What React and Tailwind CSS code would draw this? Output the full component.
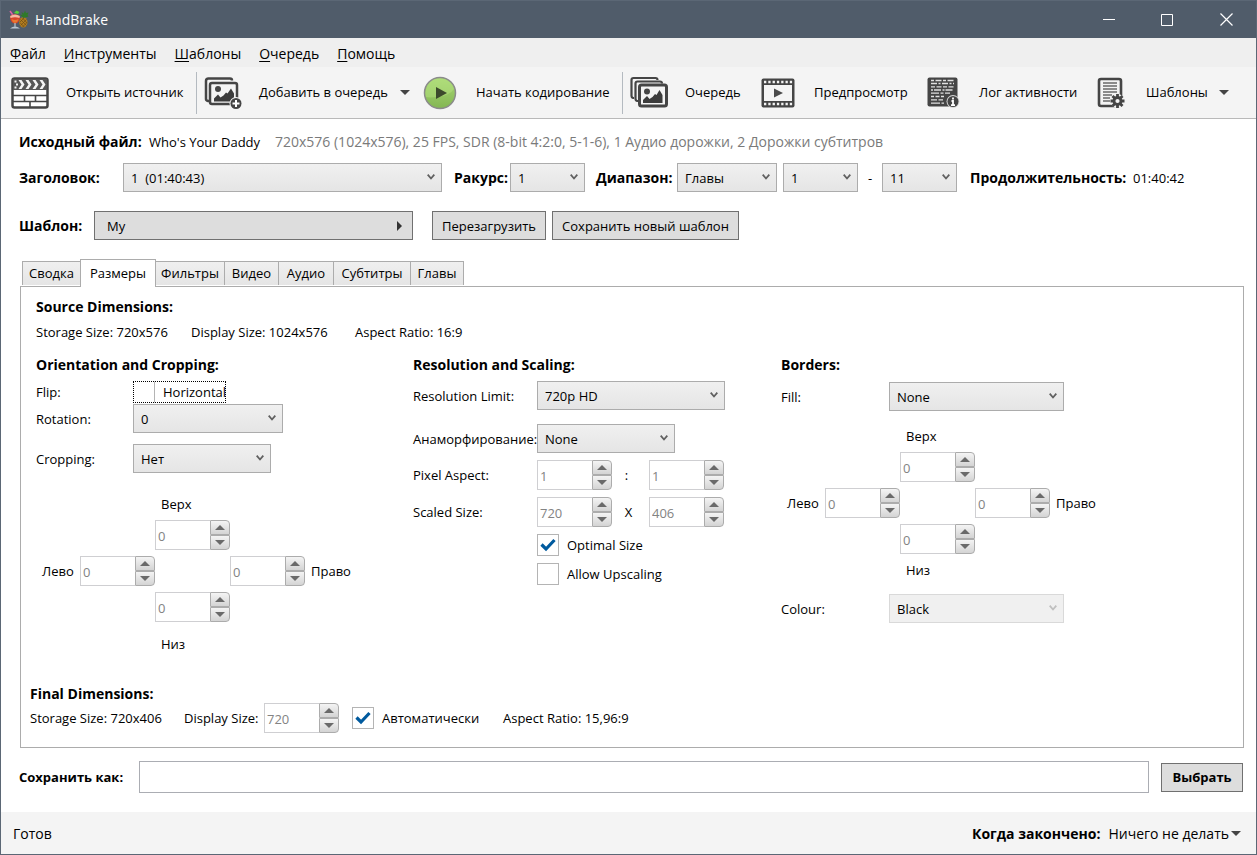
import React, { useState } from 'react';
import clsx from 'clsx';

const INK = '#454545';

const AppLogo = () => (
  <svg width="20" height="20" viewBox="0 0 20 20" aria-hidden="true">
    <ellipse cx="14.300" cy="12.200" rx="4.200" ry="5.300" fill="#b07d20" />
    <path d="M11.500 9.500l6 6M10.800 12.500l4.500 4.500M13.500 8l4.500 5M17.500 9.500l-6 6M18 12.500l-4.500 4.500M15 8l-4 4" stroke="#6b4710" strokeWidth=".6" />
    <path d="M14.500 8l-4-3.500 3 .5-1-3 2.300 1.500L16 .5l1 2.500 2.500-.5-1 2.500 1 1.500L16 7.500z" fill="#2f7a2a" />
    <path d="M5 3l2.500-2.500L10.500 2 9 4z" fill="#54d13a" />
    <path d="M1 1l3.500 5" stroke="#e05fa8" strokeWidth="1.500" />
    <path d="M1 6q5-3.500 10 0 0 6-4 7.500H5Q1 12 1 6z" fill="#d8432b" />
    <path d="M2.500 9q3.500 2 7 0-.5 3-3.500 4-3-1-3.500-4z" fill="#e8792f" />
    <path d="M1.200 6q4.800-3 9.600 0l-.3 2q-4.500-1.500-9 0z" fill="#f3b9a4" />
    <path d="M6 13v4.500M3 18q3-2 6 0z" stroke="#b9c6d2" strokeWidth="1.200" fill="#b9c6d2" />
  </svg>
);

const ClapperIcon = () => (
  <svg width="38" height="32" viewBox="0 0 38 32" fill="none" aria-hidden="true">
    <rect x="1.500" y="1.500" width="35" height="29" rx="2" fill="#fff" stroke={INK} strokeWidth="2.500" />
    <path d="M2 2h34v11H2z" fill="#565656" />
    <g fill="#f4f4f4">
      <path d="M7.500 3h3l3 4.500-3 4.500h-3l3-4.500zM14.500 3h3l3 4.500-3 4.500h-3l3-4.500zM21.500 3h3l3 4.500-3 4.500h-3l3-4.500zM28.500 3h3l3 4.500-3 4.500h-3l3-4.500z" />
      <path d="M3.500 3.500h2v2h-2zM5 6.500h2v2H5zM3.500 9.500h2v2h-2z" />
    </g>
    <path d="M2 18.500h34M2 24.500h34M13.500 18.500v6M24.500 18.500v6M19 24.500V30" stroke={INK} strokeWidth="1.600" />
  </svg>
);

const PictureShape = () => (
  <>
    <rect x="9.500" y="9" width="27" height="21" rx="2" fill="#f4f4f4" stroke={INK} strokeWidth="3" />
    <circle cx="17" cy="15.500" r="3" fill={INK} />
    <path d="M13 27v-3l4-4 2.500 3 3-2 2.500-3 1.500 1 3-5 3 5v8z" fill="#3c3c3c" />
  </>
);

const AddQueueIcon = () => (
  <svg width="39" height="34" viewBox="0 0 39 34" fill="none" aria-hidden="true">
    <path d="M5 25H4q-2-.5-2-2V5q0-2.500 2.500-2.500H26q2 0 2 2" stroke={INK} strokeWidth="2.500" />
    <rect x="6" y="7" width="27" height="21" rx="2" fill="#f4f4f4" stroke={INK} strokeWidth="2.500" />
    <circle cx="14" cy="13" r="3" fill={INK} />
    <path d="M10 25.500v-3l4-4 2.500 3 3-2 2.500-3 1.500 1 3.500-5 3 5v8z" fill="#3c3c3c" />
    <circle cx="32" cy="27.500" r="6.500" fill="#f4f4f4" />
    <circle cx="32" cy="27.500" r="5.500" fill={INK} />
    <path d="M32 24v7M28.500 27.500h7" stroke="#fff" strokeWidth="2" />
  </svg>
);

const PlayIcon = () => (
  <svg width="34" height="34" viewBox="0 0 34 34" aria-hidden="true">
    <defs>
      <linearGradient id="play" x1="0" y1="0" x2="0" y2="1">
        <stop offset="0" stopColor="#a9d875" />
        <stop offset="1" stopColor="#83b652" />
      </linearGradient>
    </defs>
    <circle cx="17" cy="17" r="15.500" fill="url(#play)" stroke="#8b8b8b" strokeWidth="1.500" />
    <path d="M3 21A14.500 14.500 0 0 1 31 13q-4 6-14 7.500T3 21z" fill="#b5e27f" opacity=".5" />
    <path d="M13 11l11 6-11 6z" fill="#3c4a2c" />
  </svg>
);

const QueueIcon = () => (
  <svg width="39" height="33" viewBox="0 0 39 33" fill="none" aria-hidden="true">
    <path d="M4 22H3q-1.500-.5-1.500-2V4Q1.500 2 3.500 2h22q2 0 2 2" stroke={INK} strokeWidth="2.200" />
    <path d="M8 25H7q-1.500-.5-1.500-2V7.500q0-2 2-2H30q2 0 2 2" stroke={INK} strokeWidth="2.200" />
    <PictureShape />
  </svg>
);

const PreviewIcon = () => (
  <svg width="34" height="30" viewBox="0 0 34 30" fill="none" aria-hidden="true">
    <rect x=".5" y=".5" width="33" height="29" rx="2" fill={INK} />
    <path d="M3 4h29M3 26h29" stroke="#f4f4f4" strokeWidth="2.600" strokeDasharray="2.300 2" />
    <rect x="3" y="7" width="28" height="16" fill="#f4f4f4" />
    <path d="M13 10.500l9 4.500-9 4.500z" fill="#4a4a4a" />
  </svg>
);

const LogIcon = () => (
  <svg width="33" height="31" viewBox="0 0 33 31" fill="none" aria-hidden="true">
    <rect x=".5" y=".5" width="30" height="29" rx="2" fill={INK} />
    <g stroke="#e0e0e0" strokeWidth="1.300">
      <path d="M4 3.500h23" strokeDasharray="3 1.500 6 1.500" />
      <path d="M4 6.500h23" strokeDasharray="6 1.500 2 1.500" />
      <path d="M4 9.800h23" strokeDasharray="4 1.500 5 1.500" />
      <path d="M4 13h22" strokeDasharray="2 1 7 1.500" />
      <path d="M4 16.200h19" strokeDasharray="8 1.500 3 1.500" />
      <path d="M4 19.500h14" strokeDasharray="3 1.500 4 1.500" />
      <path d="M4 22.800h12" strokeDasharray="6 1.500" />
      <path d="M4 26.200h13" strokeDasharray="9 1.500" />
    </g>
    <circle cx="26" cy="24.500" r="6.500" fill="#d8d8d8" />
    <circle cx="26" cy="24.500" r="5.500" fill={INK} />
    <path d="M26 20.500v2M24.500 24h1.500v4M24 28.200h4" stroke="#fff" strokeWidth="1.800" />
  </svg>
);

const PresetsIcon = () => (
  <svg width="29" height="32" viewBox="0 0 29 32" fill="none" aria-hidden="true">
    <rect x="2" y="2" width="22" height="27" rx="2" fill="#f4f4f4" stroke={INK} strokeWidth="2.600" />
    <path d="M6 6h14M6 9h14M6 12h14M6 15h14M6 18h9M6 21h7M6 24h7" stroke="#6a6a6a" strokeWidth="1.300" />
    <circle cx="20.500" cy="24" r="7" fill="#f4f4f4" />
    <path d="M20.500 17v14M13.500 24h14M15.500 19l10 10M25.500 19l-10 10" stroke={INK} strokeWidth="2.800" />
    <circle cx="20.500" cy="24" r="3.500" fill="#f4f4f4" stroke={INK} strokeWidth="2.800" />
  </svg>
);

const Caret = () => (
  <svg width="10" height="5" viewBox="0 0 10 5" className="shrink-0" aria-hidden="true">
    <path d="M0 0h10L5 5z" fill="#444" />
  </svg>
);

const Select = ({ label, options, className, disabled }) => (
  <span className={clsx('relative block h-[29px] shrink-0', className)}>
    <select
      aria-label={label}
      disabled={disabled}
      className={clsx(
        'h-full w-full appearance-none border pl-[7px] pr-5 text-black opacity-100',
        disabled ? 'border-[#d9d9d9] bg-[#f0f0f0]' : 'border-[#acacac] bg-gradient-to-b from-[#f0f0f0] to-[#e5e5e5]'
      )}
    >
      {options.map((option) => (
        <option key={option}>{option}</option>
      ))}
    </select>
    <svg width="8" height="6" viewBox="0 0 8 6" className="pointer-events-none absolute right-[7px] top-[11px]" aria-hidden="true">
      <path d="M.7.7L4 4.500 7.300.7" fill="none" stroke={disabled ? '#bfbfbf' : '#606060'} strokeWidth="1.800" />
    </svg>
  </span>
);

const spinButton =
  'flex h-[15px] w-5 items-center justify-center border border-[#acacac] bg-gradient-to-b from-[#f4f4f4] to-[#d4d4d4]';

const Spinner = ({ label, value }) => (
  <span className="flex h-[30px] w-[75px] shrink-0">
    <input aria-label={label} defaultValue={value} disabled className="w-[55px] border border-r-0 border-[#cfcfd2] bg-white pl-0.5 pt-0.5 text-[#838383]" />
    <span className="flex flex-col">
      <button type="button" aria-label={`${label} +`} className={clsx(spinButton, 'rounded-tr-sm')}>
        <svg width="10" height="5" viewBox="0 0 10 5"><path d="M0 5h10L5 0z" fill="#6a6a6a" /></svg>
      </button>
      <button type="button" aria-label={`${label} -`} className={clsx(spinButton, 'rounded-br-sm')}>
        <svg width="10" height="5" viewBox="0 0 10 5"><path d="M0 0h10L5 5z" fill="#6a6a6a" /></svg>
      </button>
    </span>
  </span>
);

const Checkbox = ({ label, defaultChecked, className, boxClassName = 'border-[#b4b4b4] bg-white' }) => {
  const [checked, setChecked] = useState(Boolean(defaultChecked));
  return (
    <label className={clsx('flex h-[22px] items-center gap-2 whitespace-nowrap', className)}>
      <span className="relative block size-[22px] shrink-0">
        <input
          type="checkbox"
          checked={checked}
          onChange={(e) => setChecked(e.target.checked)}
          className={clsx('block size-full appearance-none border', boxClassName)}
        />
        {checked && (
          <svg width="16" height="14" viewBox="0 0 16 14" className="pointer-events-none absolute left-[3px] top-1" aria-hidden="true">
            <path d="M1.500 6.500l4.500 4.500L14.500 2" fill="none" stroke="#005a9e" strokeWidth="3.200" />
          </svg>
        )}
      </span>
      {label}
    </label>
  );
};

// Top / left / right / bottom values laid out as a cross
const Sides = ({ name, bottomClassName }) => (
  <div className="grid grid-cols-[44px_75px_75px_75px_auto] items-center gap-y-1.5">
    <span className="col-start-3 pl-1.5">Верх</span>
    <span className="col-start-3"><Spinner label={`${name} верх`} value="0" /></span>
    <span className="col-start-1 pl-1.5">Лево</span>
    <Spinner label={`${name} лево`} value="0" />
    <span className="col-start-4"><Spinner label={`${name} право`} value="0" /></span>
    <span className="pl-1.5">Право</span>
    <span className="col-start-3"><Spinner label={`${name} низ`} value="0" /></span>
    <span className={clsx('col-start-3 pl-1.5', bottomClassName)}>Низ</span>
  </div>
);

const Row = ({ label, labelClassName, className, children }) => (
  <div className={clsx('flex items-center', className)}>
    <span className={clsx('shrink-0 whitespace-nowrap', labelClassName)}>{label}</span>
    {children}
  </div>
);

const ToolButton = ({ icon, label, caret, className, iconClassName }) => (
  <button type="button" className={clsx('flex h-full shrink-0 items-center whitespace-nowrap', className)}>
    <span className={clsx('shrink-0', iconClassName)}>{icon}</span>
    <span className="pb-0.5">{label}</span>
    {caret && <span className="ml-auto"><Caret /></span>}
  </button>
);

const MENU = [
  ['Ф', 'айл'],
  ['И', 'нструменты'],
  ['Ш', 'аблоны'],
  ['О', 'чередь'],
  ['П', 'омощь'],
];

const TABS = [
  ['Сводка', 'w-[58px]'],
  ['Размеры', 'w-[76px]'],
  ['Фильтры', 'w-[69px]'],
  ['Видео', 'w-[54px]'],
  ['Аудио', 'w-[55px]'],
  ['Субтитры', 'w-[77px]'],
  ['Главы', 'w-[53px]'],
];

const TitleBar = () => (
  <header className="flex h-[37px] items-center bg-[#505c6a] pl-2 text-sm text-white">
    <AppLogo />
    <h1 className="ml-1.5">HandBrake</h1>
    <div className="ml-auto flex h-full">
      <button type="button" aria-label="Свернуть" className="flex w-[58px] items-center justify-center">
        <svg width="12" height="12"><path d="M0 5.500h12" stroke="#fff" /></svg>
      </button>
      <button type="button" aria-label="Развернуть" className="flex w-[58px] items-center justify-center">
        <svg width="12" height="12"><path d="M.5.5h11v11H.5z" fill="none" stroke="#fff" /></svg>
      </button>
      <button type="button" aria-label="Закрыть" className="flex w-[60px] items-center justify-center">
        <svg width="13" height="13"><path d="M.5.5l12 12M12.500.5l-12 12" stroke="#fff" strokeWidth="1.200" /></svg>
      </button>
    </div>
  </header>
);

const Toolbar = () => (
  <div className="flex h-[52px] items-center border-b border-[#b9b9b9] bg-[#f4f4f4]">
    <ToolButton className="w-[195px] pl-2.5" iconClassName="w-[55px]" icon={<ClapperIcon />} label="Открыть источник" />
    <span className="h-[42px] w-px bg-[#b4bac0]" />
    <ToolButton className="w-[213px] pl-[7px]" iconClassName="w-[55px]" icon={<AddQueueIcon />} label="Добавить в очередь" caret />
    <ToolButton className="w-[212px] pl-[13px]" iconClassName="w-[53px]" icon={<PlayIcon />} label="Начать кодирование" />
    <span className="h-[42px] w-px bg-[#b4bac0]" />
    <ToolButton className="w-[131px] pl-[7px]" iconClassName="w-[55px]" icon={<QueueIcon />} label="Очередь" />
    <ToolButton className="w-[166px] pl-[7px]" iconClassName="w-[53px]" icon={<PreviewIcon />} label="Предпросмотр" />
    <ToolButton className="w-[169px] pl-[7px]" iconClassName="w-[52px]" icon={<LogIcon />} label="Лог активности" />
    <ToolButton className="w-[140px] pl-2" iconClassName="w-[49px]" icon={<PresetsIcon />} label="Шаблоны" caret />
  </div>
);

const DimensionsTab = () => (
  <section className="ml-px border border-[#acacac] pb-3.5 pl-[15px] pt-2.5 leading-5">
    <h2 className="text-sm font-bold leading-5">Source Dimensions:</h2>
    <div className="mt-[5px] flex whitespace-nowrap">
      <span className="w-[155px]">Storage Size: 720x576</span>
      <span className="w-[164px]">Display Size: 1024x576</span>
      <span>Aspect Ratio: 16:9</span>
    </div>

    <div className="mt-[13px] flex">
      <div className="w-[377px] shrink-0">
        <h2 className="text-sm font-bold leading-5">Orientation and Cropping:</h2>
        <Row className="mt-1.5" label="Flip:" labelClassName="w-[97px]">
          <Checkbox
            label="Horizontal"
            className="w-[93px] overflow-hidden outline outline-1 -outline-offset-1 outline-dotted outline-black"
            boxClassName="border-transparent border-r-[#b4b4b4] bg-transparent"
          />
        </Row>
        <Row className="mt-px" label="Rotation:" labelClassName="w-[97px]">
          <Select label="Rotation" options={['0', '90', '180', '270']} className="w-[150px]" />
        </Row>
        <Row className="mt-[11px]" label="Cropping:" labelClassName="w-[97px]">
          <Select label="Cropping" options={['Нет', 'Автоматически']} className="w-[138px]" />
        </Row>
        <div className="mt-[21px]">
          <Sides name="Cropping" bottomClassName="mt-1.5" />
        </div>
      </div>

      <div className="w-[368px] shrink-0">
        <h2 className="text-sm font-bold leading-5">Resolution and Scaling:</h2>
        <Row className="mt-1.5" label="Resolution Limit:" labelClassName="w-[124px]">
          <Select label="Resolution Limit" options={['720p HD', '1080p HD', 'None']} className="w-[188px]" />
        </Row>
        <Row className="mt-3.5" label="Анаморфирование:" labelClassName="w-[124px]">
          <Select label="Анаморфирование" options={['None', 'Automatic']} className="w-[138px]" />
        </Row>
        <Row className="mt-[7px]" label="Pixel Aspect:" labelClassName="w-[124px]">
          <Spinner label="Pixel Aspect X" value="1" />
          <span className="w-[37px] pr-2 text-center">:</span>
          <Spinner label="Pixel Aspect Y" value="1" />
        </Row>
        <Row className="mt-[7px]" label="Scaled Size:" labelClassName="w-[124px]">
          <Spinner label="Scaled Width" value="720" />
          <span className="w-[37px] pr-1 text-center">X</span>
          <Spinner label="Scaled Height" value="406" />
        </Row>
        <Checkbox label="Optimal Size" defaultChecked className="ml-[124px] mt-[7px]" />
        <Checkbox label="Allow Upscaling" className="ml-[124px] mt-[7px]" />
      </div>

      <div className="flex-1">
        <h2 className="text-sm font-bold leading-5">Borders:</h2>
        <Row className="mt-[7px]" label="Fill:" labelClassName="w-[108px]">
          <Select label="Fill" options={['None', 'Height', 'Width']} className="w-[175px]" />
        </Row>
        <div className="mt-[15px]">
          <Sides name="Borders" />
        </div>
        <Row className="mt-3.5" label="Colour:" labelClassName="w-[108px]">
          <Select label="Colour" options={['Black']} className="w-[175px]" disabled />
        </Row>
      </div>
    </div>

    <div className="-ml-1.5 mt-[31px]">
      <h2 className="text-sm font-bold leading-[18px]">Final Dimensions:</h2>
      <div className="flex items-center whitespace-nowrap">
        <span className="w-[154px]">Storage Size: 720x406</span>
        <span className="w-20">Display Size:</span>
        <Spinner label="Display Size" value="720" />
        <Checkbox label="Автоматически" defaultChecked className="ml-[13px] w-[151px]" />
        <span>Aspect Ratio: 15,96:9</span>
      </div>
    </div>
  </section>
);

const App = () => {
  const [tab, setTab] = useState('Размеры');

  return (
    <div className="flex min-h-screen flex-col border border-[#5b6775] bg-white font-['Open_Sans','Noto_Sans',sans-serif] text-[13px] leading-5 text-black">
      <TitleBar />
      <nav className="flex h-[29px] items-center gap-[18px] bg-[#efefef] pl-[9px] pt-0.5 text-sm">
        {MENU.map(([key, rest]) => (
          <button key={key} type="button"><span className="underline underline-offset-2">{key}</span>{rest}</button>
        ))}
      </nav>
      <Toolbar />

      <main className="flex-1 pb-[19px] pl-[18px] pr-3 pt-[13px]">
        <div className="flex items-center whitespace-nowrap">
          <b className="w-[130px] text-sm">Исходный файл:</b>
          <span className="w-[126px]">Who's Your Daddy</span>
          <span className="text-sm text-[#7a7a7a]">720x576 (1024x576), 25 FPS, SDR (8-bit 4:2:0, 5-1-6), 1 Аудио дорожки, 2 Дорожки субтитров</span>
        </div>

        <div className="mt-[11px] flex items-center whitespace-nowrap">
          <b className="w-[104px] text-sm">Заголовок:</b>
          <Select label="Заголовок" options={['1\u00a0\u00a0(01:40:43)']} className="w-[319px]" />
          <b className="ml-3 w-14 text-sm">Ракурс:</b>
          <Select label="Ракурс" options={['1']} className="w-[75px]" />
          <b className="ml-[11px] w-[81px] text-sm">Диапазон:</b>
          <Select label="Диапазон" options={['Главы', 'Секунды', 'Кадры']} className="w-[100px]" />
          <Select label="Первая глава" options={['1']} className="ml-1.5 w-[75px]" />
          <span className="w-6 text-center">-</span>
          <Select label="Последняя глава" options={['11']} className="w-[75px]" />
          <b className="ml-[13px] w-[163px] text-sm">Продолжительность:</b>
          <span>01:40:42</span>
        </div>

        <div className="mt-[19px] flex items-center whitespace-nowrap">
          <b className="w-[75px] text-sm">Шаблон:</b>
          <button type="button" className="flex h-[29px] w-[319px] items-center justify-between border border-[#707070] bg-[#ddd] pl-3 pr-2.5">
            My
            <svg width="5" height="10" viewBox="0 0 5 10" aria-hidden="true"><path d="M0 0l5 5-5 5z" fill="#333" /></svg>
          </button>
          <button type="button" className="ml-[19px] h-[29px] w-[114px] border border-[#707070] bg-[#ddd]">Перезагрузить</button>
          <button type="button" className="ml-1.5 h-[29px] w-[187px] border border-[#707070] bg-[#ddd]">Сохранить новый шаблон</button>
        </div>

        <div role="tablist" className="-mb-px ml-[3px] mt-[19px] flex h-7 items-end">
          {TABS.map(([name, width]) => (
            <button
              key={name}
              type="button"
              role="tab"
              aria-selected={tab === name}
              onClick={() => setTab(name)}
              className={clsx(
                'border border-b-0 border-[#acacac] pb-0.5 text-center',
                width,
                tab === name
                  ? 'relative h-7 bg-white'
                  : 'mb-0.5 h-6 border-l-0 bg-gradient-to-b from-[#f0f0f0] to-[#e5e5e5] first:border-l first:border-r-0'
              )}
            >
              {name}
            </button>
          ))}
        </div>
        <DimensionsTab />

        <div className="mr-px mt-[13px] flex items-center">
          <label htmlFor="destination" className="w-[120px] font-bold">Сохранить как:</label>
          <input id="destination" type="text" className="h-8 min-w-0 flex-1 border border-[#abadb3] px-2" />
          <button type="button" className="ml-3 h-[29px] w-[82px] border border-[#707070] bg-[#ddd] font-bold">Выбрать</button>
        </div>
      </main>

      <footer className="flex h-[42px] items-center bg-[#f4f4f4] pl-3 pr-[15px] pt-px text-sm">
        <span>Готов</span>
        <b className="ml-auto">Когда закончено:</b>
        <button type="button" className="ml-2 flex items-center gap-0.5">Ничего не делать <Caret /></button>
      </footer>
    </div>
  );
};

export default App;
